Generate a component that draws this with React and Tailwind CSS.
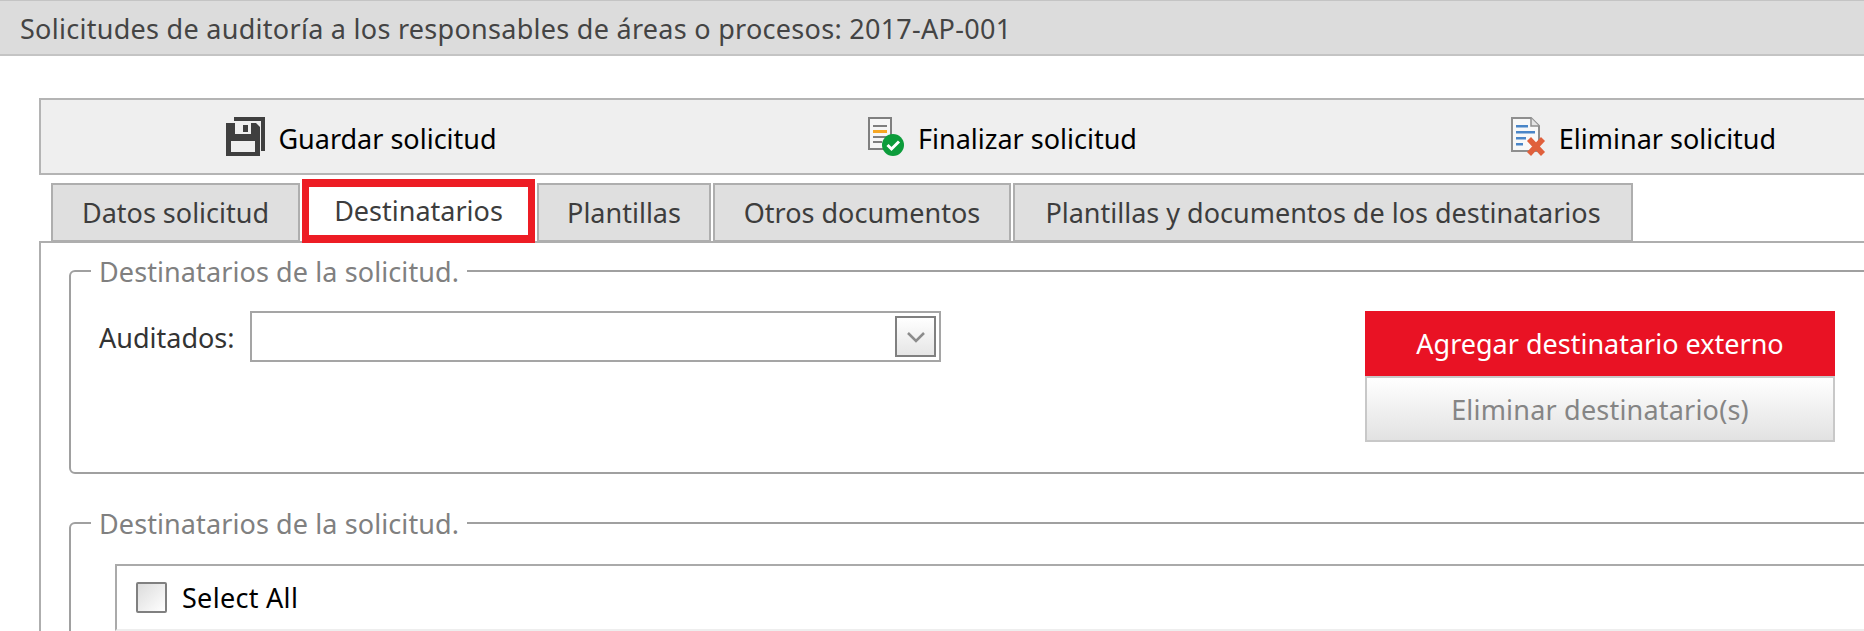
const FONT = "font-['Noto_Sans','Open_Sans',sans-serif]";

function SaveIcon() {
  return (
    <svg width="39" height="39" viewBox="0 0 39 39" className="shrink-0">
      <path d="M8 0H39V34H35V4H8Z" fill="#3f3f3f" />
      <path d="M0 6H30L34 10V39H0Z" fill="#3f3f3f" />
      <rect x="9" y="6" width="16" height="11" fill="#efefef" />
      <rect x="17" y="8" width="5" height="7" fill="#3f3f3f" />
      <rect x="5" y="24" width="24" height="11" fill="#efefef" />
    </svg>
  );
}

function FinishIcon() {
  return (
    <svg width="36" height="39" viewBox="0 0 36 39" className="shrink-0">
      <rect x="1" y="1" width="22" height="31" fill="#f6f6f6" stroke="#7f7f7f" strokeWidth="2" />
      <rect x="5" y="8" width="14" height="2" fill="#7f7f7f" />
      <rect x="5" y="13" width="14" height="3" fill="#f5a623" />
      <rect x="5" y="19" width="14" height="2" fill="#7f7f7f" />
      <rect x="5" y="24" width="9" height="2" fill="#7f7f7f" />
      <circle cx="25" cy="28" r="11" fill="#0c9c3b" />
      <path d="M19.5 28L23.5 32L31 24.5" fill="none" stroke="#fff" strokeWidth="3" />
    </svg>
  );
}

function DeleteIcon() {
  return (
    <svg width="35" height="39" viewBox="0 0 35 39" className="shrink-0">
      <path d="M1 1H20L28 9V34H1Z" fill="#f8f8f8" stroke="#8f8f8f" strokeWidth="2" />
      <path d="M20 1V9H28" fill="#e4e4e4" stroke="#8f8f8f" strokeWidth="1.5" />
      <rect x="5" y="8" width="12" height="2.5" fill="#4a86c8" />
      <rect x="5" y="14" width="19" height="2.5" fill="#4a86c8" />
      <rect x="5" y="20" width="10" height="2.5" fill="#4a86c8" />
      <rect x="5" y="26" width="7" height="2.5" fill="#4a86c8" />
      <path d="M18 22L32 37M32 22L18 37" stroke="#e0603c" strokeWidth="5.5" />
    </svg>
  );
}

function Tab({ w, children }) {
  return (
    <div className={`${w} mt-[4px] h-[59px] pt-[2px] shrink-0 border-2 border-[#aeaeae] bg-[#dfdfdf] flex items-center justify-center text-[#3d3d3d]`}>
      {children}
    </div>
  );
}

function Legend({ children }) {
  return <legend className="ml-[20px] px-[8px] pt-[2px] leading-[30px] text-[#808080] tracking-[0.1px]">{children}</legend>;
}

export default function App() {
  return (
    <div className={`${FONT} w-[1864px] h-[631px] overflow-hidden bg-white text-[27px]`}>
      <div className="h-[56px] pt-[4px] border-t border-b-2 border-t-[#c4c4c4] border-b-[#c4c4c4] bg-[#dcdcdc] pl-[20px] flex items-center text-[#444] tracking-[0.28px]">
        Solicitudes de auditoría a los responsables de áreas o procesos: 2017-AP-001
      </div>

      <div className="w-[1927px] ml-[39px] mt-[42px]">
        <div className="grid grid-cols-3 h-[77px] border-2 border-[#b4b4b4] bg-[#efefef] text-black">
          <div className="flex items-center justify-center gap-[13px]">
            <SaveIcon />
            <span className="pt-[5px]">Guardar solicitud</span>
          </div>
          <div className="flex items-center justify-center gap-[14px]">
            <FinishIcon />
            <span className="pt-[5px]">Finalizar solicitud</span>
          </div>
          <div className="flex items-center justify-center gap-[13px]">
            <DeleteIcon />
            <span className="pt-[5px]">Eliminar solicitud</span>
          </div>
        </div>

        <div className="relative z-10 flex items-start h-[64px] -mb-[2px] mt-[4px] pl-[12px] gap-[2px]">
          <Tab w="w-[249px]">Datos solicitud</Tab>
          <div className="w-[233px] h-[64px] pt-[1px] shrink-0 border-x-[7px] border-y-[8px] border-[#ed1c24] bg-white flex items-center justify-center text-[#3d3d3d]">
            Destinatarios
          </div>
          <Tab w="w-[174px]">Plantillas</Tab>
          <Tab w="w-[298px]">Otros documentos</Tab>
          <Tab w="w-[620px]">Plantillas y documentos de los destinatarios</Tab>
        </div>

        <div className="border-2 border-[#aeaeae] bg-white pl-[28px] pt-[12px] h-[400px]">
          <fieldset className="h-[219px] border-2 border-[#a0a0a0] rounded-[6px] pr-[127px]">
            <Legend>Destinatarios de la solicitud.</Legend>
            <div className="flex justify-between pl-[28px] pt-[24px]">
              <div className="flex items-center h-[51px] text-[#333]">
                <span className="w-[151px] pt-[4px]">Auditados:</span>
                <div className="w-[691px] h-[51px] border-2 border-[#a5a5a5] bg-white flex items-center justify-end pr-[3px]">
                  <div className="w-[41px] h-[41px] border-2 border-[#808080] bg-gradient-to-b from-white to-[#e6e6e6] flex items-center justify-center">
                    <svg width="20" height="12" viewBox="0 0 20 12">
                      <path d="M2 2L10 10L18 2" fill="none" stroke="#8c8c8c" strokeWidth="2.5" />
                    </svg>
                  </div>
                </div>
              </div>
              <div className="w-[470px] flex flex-col">
                <div className="h-[65px] pt-[2px] bg-[#e91224] text-white flex items-center justify-center">
                  Agregar destinatario externo
                </div>
                <div className="h-[66px] pt-[2px] border-2 border-[#c8c8c8] bg-gradient-to-b from-white to-[#e2e2e2] text-[#858585] tracking-[0.2px] flex items-center justify-center">
                  Eliminar destinatario(s)
                </div>
              </div>
            </div>
          </fieldset>

          <fieldset className="mt-[33px] h-[200px] border-2 border-[#a0a0a0] rounded-[6px]">
            <Legend>Destinatarios de la solicitud.</Legend>
            <div className="ml-[44px] mt-[25px] h-[67px] border-2 border-[#aaaaaa] border-b-[#eeeeee] bg-white flex items-center pl-[19px] gap-[15px] text-black">
              <div className="w-[31px] h-[31px] border-2 border-[#808080] rounded-[2px] bg-gradient-to-br from-[#dcdcdc] to-white" />
              <span className="pt-[1px] tracking-[0.3px]">Select All</span>
            </div>
          </fieldset>
        </div>
      </div>
    </div>
  );
}
